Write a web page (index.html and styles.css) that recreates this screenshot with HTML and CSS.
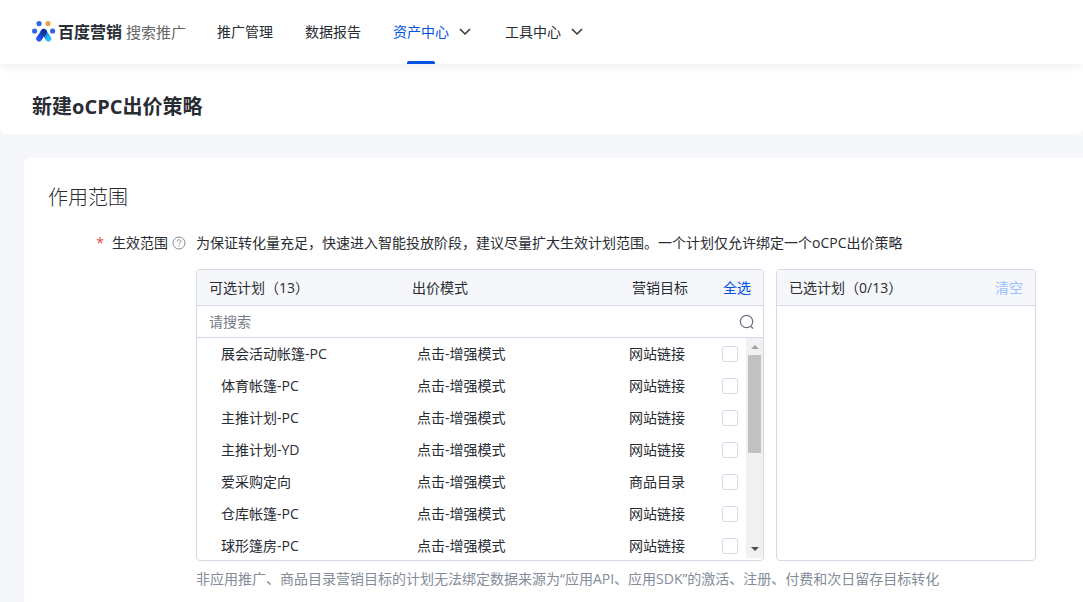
FILE: index.html
```
<!DOCTYPE html>
<html lang="zh-CN">
<head>
    <meta charset="UTF-8">
    <meta name="viewport" content="width=device-width, initial-scale=1.0">
    <title>新建oCPC出价策略</title>
    <link rel="stylesheet" href="styles.css">
</head>
<body>
    <header class="top-bar">
        <a class="logo" href="#">
            <svg class="logo-mark" width="24" height="24" viewBox="0 0 24 24">
                <defs>
                    <linearGradient id="legLeft" x1="0" y1="1" x2="1" y2="0">
                        <stop offset="0" stop-color="#2456f0"/>
                        <stop offset="1" stop-color="#0b3196"/>
                    </linearGradient>
                    <linearGradient id="legRight" x1="0" y1="0" x2="1" y2="1">
                        <stop offset="0" stop-color="#1d56e0"/>
                        <stop offset="1" stop-color="#22c3fb"/>
                    </linearGradient>
                </defs>
                <circle cx="7" cy="3.6" r="2.6" fill="#2f66e8"/>
                <circle cx="16" cy="3.6" r="2.6" fill="#e3a44a"/>
                <circle cx="2.6" cy="11" r="2.6" fill="#2f66e8"/>
                <circle cx="20.6" cy="11" r="2.6" fill="#2f66e8"/>
                <path d="M11.5 12l4.8 6.5" stroke="url(#legRight)" stroke-width="6" stroke-linecap="round"/>
                <path d="M12 12L7.2 18.5" stroke="url(#legLeft)" stroke-width="6" stroke-linecap="round"/>
                <path d="M11.7 16.5l2.6 5.5H9.1z" fill="#fff"/>
            </svg>
            <strong>百度营销</strong>
            <span>搜索推广</span>
        </a>
        <nav class="main-nav">
            <a href="#">推广管理</a>
            <a href="#">数据报告</a>
            <a class="active" href="#"><span>资产中心</span>
                <svg width="12" height="8" viewBox="0 0 12 8"><path d="M1 1l5 5 5-5"/></svg>
            </a>
            <a href="#"><span>工具中心</span>
                <svg width="12" height="8" viewBox="0 0 12 8"><path d="M1 1l5 5 5-5"/></svg>
            </a>
        </nav>
    </header>

    <div class="page-title">
        <h1>新建oCPC出价策略</h1>
    </div>

    <main class="card">
        <h2>作用范围</h2>
        <div class="form-row">
            <div class="form-label">
                <span class="required">*</span>
                <span id="scopeLabel">生效范围</span>
                <svg class="help-icon" width="14" height="14" viewBox="0 0 14 14">
                    <circle cx="7" cy="7" r="6"/>
                    <path d="M5.2 5.6c0-2.5 3.7-2.4 3.7-.2 0 1.3-1.9 1.4-1.9 2.8M7 9.4v1.2"/>
                </svg>
            </div>
            <div class="form-content" role="group" aria-labelledby="scopeLabel">
                <p class="intro">为保证转化量充足，快速进入智能投放阶段，建议尽量扩大生效计划范围。一个计划仅允许绑定一个oCPC出价策略</p>
                <div class="transfer">
                    <section class="panel available">
                        <div class="panel-head">
                            <span>可选计划（13）</span>
                            <span>出价模式</span>
                            <span>营销目标</span>
                            <button type="button">全选</button>
                        </div>
                        <div class="search">
                            <input type="text" placeholder="请搜索" aria-label="请搜索">
                            <svg width="16" height="16" viewBox="0 0 16 16"><circle cx="7.5" cy="7.5" r="6.2"/><path d="M11.8 12.5l2.4 2"/></svg>
                        </div>
                        <div class="plan-list">
                            <table>
                                <tbody>
                                    <tr><td><label for="plan1">展会活动帐篷-PC</label></td><td>点击-增强模式</td><td>网站链接</td><td><input type="checkbox" id="plan1"></td></tr>
                                    <tr><td><label for="plan2">体育帐篷-PC</label></td><td>点击-增强模式</td><td>网站链接</td><td><input type="checkbox" id="plan2"></td></tr>
                                    <tr><td><label for="plan3">主推计划-PC</label></td><td>点击-增强模式</td><td>网站链接</td><td><input type="checkbox" id="plan3"></td></tr>
                                    <tr><td><label for="plan4">主推计划-YD</label></td><td>点击-增强模式</td><td>网站链接</td><td><input type="checkbox" id="plan4"></td></tr>
                                    <tr><td><label for="plan5">爱采购定向</label></td><td>点击-增强模式</td><td>商品目录</td><td><input type="checkbox" id="plan5"></td></tr>
                                    <tr><td><label for="plan6">仓库帐篷-PC</label></td><td>点击-增强模式</td><td>网站链接</td><td><input type="checkbox" id="plan6"></td></tr>
                                    <tr><td><label for="plan7">球形篷房-PC</label></td><td>点击-增强模式</td><td>网站链接</td><td><input type="checkbox" id="plan7"></td></tr>
                                </tbody>
                            </table>
                            <div class="scrollbar">
                                <svg width="8" height="4" viewBox="0 0 8 4"><path d="M0 4l4-4 4 4z" fill="#a3a3a3"/></svg>
                                <div class="thumb"></div>
                                <svg width="8" height="4" viewBox="0 0 8 4"><path d="M0 0l4 4 4-4z" fill="#505050"/></svg>
                            </div>
                        </div>
                    </section>
                    <section class="panel selected">
                        <div class="panel-head">
                            <span>已选计划（0/13）</span>
                            <button type="button" disabled>清空</button>
                        </div>
                    </section>
                </div>
                <p class="note">非应用推广、商品目录营销目标的计划无法绑定数据来源为“应用API、应用SDK”的激活、注册、付费和次日留存目标转化</p>
            </div>
        </div>
    </main>
</body>
</html>
```

FILE: styles.css
```
* {
    box-sizing: border-box;
}

body {
    margin: 0;
    min-height: 100vh;
    display: flex;
    flex-direction: column;
    overflow-x: hidden;
    background: #f6f7fb;
    color: #282c33;
    font-family: "Open Sans", "Noto Sans CJK SC", sans-serif;
    font-size: 14px;
    line-height: 20px;
}

h1, h2, p {
    margin: 0;
}

a {
    color: inherit;
    text-decoration: none;
}

button, input {
    font: inherit;
}

/* Top navigation */
.top-bar {
    position: relative;
    display: flex;
    gap: 31px;
    height: 64px;
    padding-left: 32px;
    background: #fff;
    box-shadow: 0 2px 10px rgba(0, 0, 0, 0.08);
}

.logo {
    display: flex;
    align-items: center;
    white-space: nowrap;
}

.logo strong {
    margin: 0 4px 0 2px;
    font-size: 16px;
}

.logo span {
    font-size: 15px;
    color: #666;
}

.logo-mark {
    fill: none;
}

.main-nav {
    display: flex;
    gap: 32px;
}

.main-nav a {
    display: flex;
    align-items: center;
    gap: 10px;
    white-space: nowrap;
}

.main-nav a:has(svg) {
    padding-right: 2px;
}

.main-nav svg {
    fill: none;
    stroke: #333;
    stroke-width: 1.5;
}

.main-nav span {
    position: relative;
    line-height: 64px;
}

.main-nav .active span {
    color: #0052e0;
}

.main-nav .active span::after {
    content: "";
    position: absolute;
    bottom: 0;
    left: 14px;
    width: 28px;
    height: 3px;
    border-radius: 2px 2px 0 0;
    background: #0052e0;
}

.page-title {
    padding: 28px 32px 12px;
    border-radius: 0 0 6px 6px;
    background: #fff;
}

.page-title h1 {
    font-size: 20px;
    line-height: 30px;
    font-weight: 700;
}

/* Form card */
.card {
    flex: 1;
    margin: 24px 0 0 24px;
    padding: 24px;
    border-radius: 6px 0 0 0;
    background: #fff;
}

.card h2 {
    font-size: 20px;
    line-height: 32px;
    font-weight: 300;
}

.form-row {
    display: flex;
    margin-top: 18px;
}

.form-label {
    display: flex;
    align-items: center;
    justify-content: flex-end;
    flex: none;
    width: 148px;
    height: 22px;
    padding-right: 10px;
}

.required {
    margin-right: 8px;
    color: #e0483e;
}

.help-icon {
    margin-left: 4px;
    fill: none;
    stroke: #848b99;
}

.form-content {
    flex: 1;
    max-width: 840px;
}

.intro {
    line-height: 22px;
    white-space: nowrap;
}

.transfer {
    display: flex;
    gap: 12px;
    margin-top: 15px;
}

.panel {
    height: 292px;
    border: 1px solid #d3d9e6;
    border-radius: 4px;
    overflow: hidden;
}

.available {
    flex: 1;
}

.selected {
    width: 260px;
}

.panel-head {
    display: flex;
    align-items: center;
    justify-content: space-between;
    height: 36px;
    padding: 0 12px;
    border-bottom: 1px solid #d3d9e6;
    background: #f6f7fb;
}

.available .panel-head {
    display: grid;
    grid-template-columns: 203px 1fr 91px 28px;
}

.panel-head button {
    padding: 0;
    border: 0;
    background: none;
    color: #0052e0;
    cursor: pointer;
}

.panel-head button:disabled {
    color: #99bfff;
    cursor: default;
}

.search {
    display: flex;
    align-items: center;
    height: 32px;
    padding: 0 8px 0 12px;
    border-bottom: 1px solid #d3d9e6;
}

.search input {
    flex: 1;
    padding: 0;
    border: 0;
    outline: none;
    background: none;
}

.search input::placeholder {
    color: #757b87;
}

.search svg {
    fill: none;
    stroke: #6b7280;
    stroke-width: 1.3;
}

.plan-list {
    display: flex;
    height: 222px;
    overflow: hidden;
}

.plan-list table {
    flex: 1;
    table-layout: fixed;
    border-collapse: collapse;
}

.plan-list tr {
    height: 32px;
}

.plan-list td {
    padding: 0;
}

.plan-list td:nth-child(1) {
    width: 220px;
    padding-left: 24px;
}

.plan-list td:nth-child(3) {
    width: 93px;
}

.plan-list td:nth-child(4) {
    width: 24px;
}

.plan-list input {
    display: block;
    appearance: none;
    width: 16px;
    height: 16px;
    margin: 0;
    border: 1px solid #d3d9e6;
    border-radius: 3px;
    background: #fff;
}

.plan-list input:checked {
    background: #0052e0;
}

.scrollbar {
    display: flex;
    flex-direction: column;
    align-items: center;
    flex: none;
    width: 17px;
    height: 220px;
    padding: 7px 2px;
    background: #f1f1f1;
}

.scrollbar .thumb {
    width: 13px;
    height: 98px;
    margin: 6px 0 auto;
    background: #c1c1c1;
}

.note {
    margin-top: 8px;
    color: #848b99;
    white-space: nowrap;
}
```
